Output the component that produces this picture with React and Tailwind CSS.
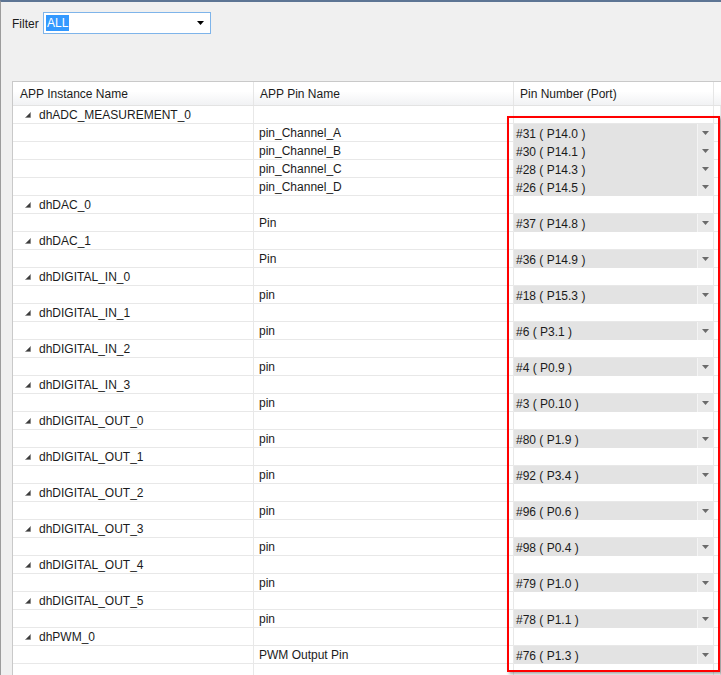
const groups = [
  {
    name: "dhADC_MEASUREMENT_0",
    pins: [
      ["pin_Channel_A", "#31 ( P14.0 )"],
      ["pin_Channel_B", "#30 ( P14.1 )"],
      ["pin_Channel_C", "#28 ( P14.3 )"],
      ["pin_Channel_D", "#26 ( P14.5 )"],
    ],
  },
  { name: "dhDAC_0", pins: [["Pin", "#37 ( P14.8 )"]] },
  { name: "dhDAC_1", pins: [["Pin", "#36 ( P14.9 )"]] },
  { name: "dhDIGITAL_IN_0", pins: [["pin", "#18 ( P15.3 )"]] },
  { name: "dhDIGITAL_IN_1", pins: [["pin", "#6 ( P3.1 )"]] },
  { name: "dhDIGITAL_IN_2", pins: [["pin", "#4 ( P0.9 )"]] },
  { name: "dhDIGITAL_IN_3", pins: [["pin", "#3 ( P0.10 )"]] },
  { name: "dhDIGITAL_OUT_0", pins: [["pin", "#80 ( P1.9 )"]] },
  { name: "dhDIGITAL_OUT_1", pins: [["pin", "#92 ( P3.4 )"]] },
  { name: "dhDIGITAL_OUT_2", pins: [["pin", "#96 ( P0.6 )"]] },
  { name: "dhDIGITAL_OUT_3", pins: [["pin", "#98 ( P0.4 )"]] },
  { name: "dhDIGITAL_OUT_4", pins: [["pin", "#79 ( P1.0 )"]] },
  { name: "dhDIGITAL_OUT_5", pins: [["pin", "#78 ( P1.1 )"]] },
  { name: "dhPWM_0", pins: [["PWM Output Pin", "#76 ( P1.3 )"]] },
];

const cell = "h-[18px] pt-px border-b border-r border-[#e8e8e8] flex items-center";

function Expander() {
  return (
    <svg width="6" height="6" viewBox="0 0 6 6" className="mr-[8px]">
      <polygon points="5.5,0.5 5.5,5.5 0.5,5.5" fill="#3c3c3c" stroke="#7a7a7a" strokeWidth="0.6" />
    </svg>
  );
}

function Arrow({ color = "#5a5a5a" }) {
  return (
    <svg width="7" height="4" viewBox="0 0 7 4">
      <polygon points="0,0 7,0 3.5,4" fill={color} />
    </svg>
  );
}

function PinCombo({ value }) {
  return (
    <div className="h-full w-[199px] flex bg-[#e3e3e3]">
      <span className="flex-1 pl-[2px] pt-px flex items-center">{value}</span>
      <span className="w-[16px] flex items-center justify-center bg-[#e9e9e9] border-l border-[#f4f4f4]">
        <Arrow color="#6b6b6b" />
      </span>
    </div>
  );
}

export default function App() {
  return (
    <div
      className="relative w-[721px] h-[675px] overflow-hidden bg-[#f0f0f0] border-l border-[#9c9c9c] border-t-2 border-t-[#5d7594] text-[12px] text-[#1b1b1b]"
      style={{ fontFamily: '"Liberation Sans", Arial, sans-serif' }}
    >
      <div className="flex items-center h-[22px] mt-[10px] pl-[11px]">
        <span className="w-[31px] pt-[2px]">Filter</span>
        <div className="w-[168px] h-[22px] bg-white border border-[#7eb4ea] flex items-center pl-[2px] pr-[6px]">
          <span className="bg-[#3399ff] text-white h-[16px] leading-[17px] px-[1px]">ALL</span>
          <span className="flex-1" />
          <Arrow color="#000" />
        </div>
      </div>

      <div className="ml-[11px] mt-[47px] bg-white border-l border-t border-[#c9c9c9]">
        <div className="grid grid-cols-[241px_260px_200px_1fr] h-[24px] bg-gradient-to-b from-white from-40% to-[#f1f2f4] border-b border-[#e3e3e3]">
          <div className="border-r border-[#e6e6e6] pl-[7px] pt-px flex items-center">APP Instance Name</div>
          <div className="border-r border-[#e6e6e6] pl-[6px] pt-px flex items-center">APP Pin Name</div>
          <div className="border-r border-[#e6e6e6] pl-[6px] pt-px flex items-center">Pin Number (Port)</div>
          <div />
        </div>
        <div className="grid grid-cols-[241px_260px_200px_1fr]">
          {groups.map((g) => (
            <div key={g.name} className="contents">
              <div className={`${cell} pl-[12px]`}>
                <Expander />
                {g.name}
              </div>
              <div className={cell} />
              <div className={cell} />
              <div className={cell} />
              {g.pins.map(([pin, port]) => (
                <div key={pin + port} className="contents">
                  <div className={cell} />
                  <div className={`${cell} pl-[5px]`}>{pin}</div>
                  <div className="h-[18px] border-r border-[#e8e8e8]">
                    <PinCombo value={port} />
                  </div>
                  <div className={cell} />
                </div>
              ))}
            </div>
          ))}
          <div className={cell} />
          <div className={cell} />
          <div className={cell} />
          <div className={cell} />
        </div>
      </div>

      <div className="absolute left-[506px] top-[114px] w-[213px] h-[556px] border-2 border-[#ff0000] shadow-[2px_2px_3px_rgba(0,0,0,0.35)]" />
    </div>
  );
}
